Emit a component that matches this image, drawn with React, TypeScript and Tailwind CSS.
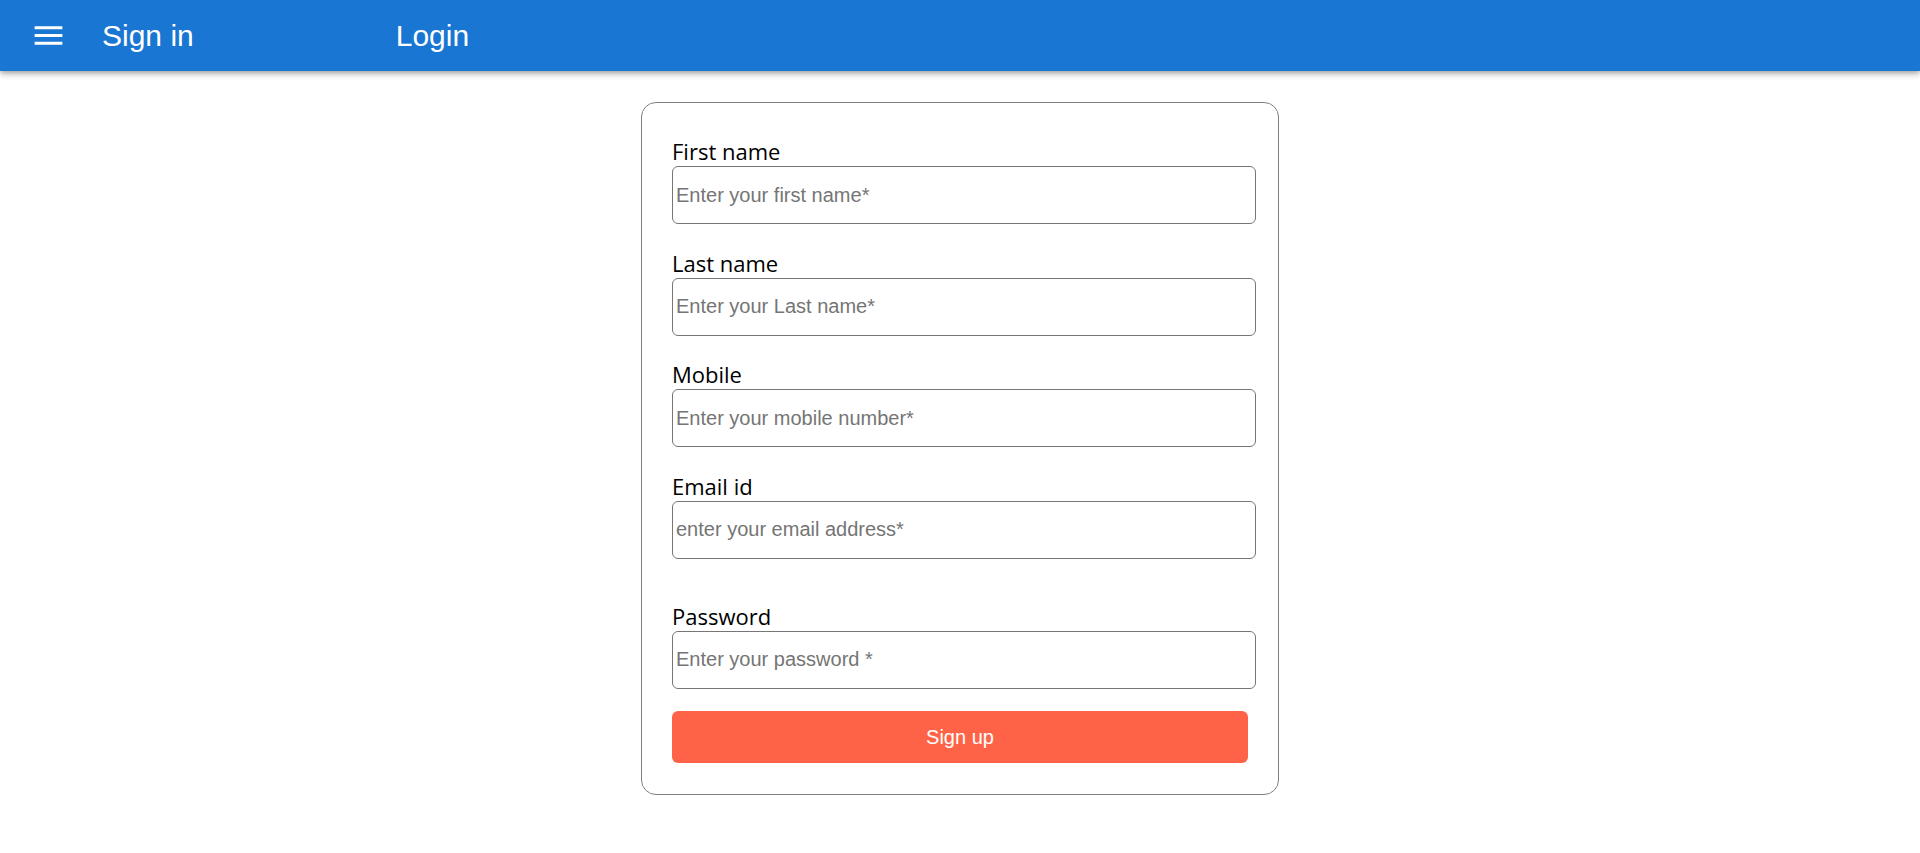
import type { ReactNode } from "react";

function MenuIcon() {
  return (
    <svg viewBox="0 0 24 24" className="w-[37px] h-[37px] fill-white" aria-hidden="true">
      <path d="M3 18h18v-2H3zm0-5h18v-2H3zm0-7v2h18V6z" />
    </svg>
  );
}

function Field({
  label,
  placeholder,
  type = "text",
  last,
}: {
  label: string;
  placeholder: string;
  type?: string;
  last?: ReactNode;
}) {
  return (
    <div className="flex flex-col">
      <label className="text-[22px] leading-[29px] text-black font-['Open_Sans',sans-serif]">
        {label}
      </label>
      <input
        type={type}
        placeholder={placeholder}
        className="w-[584px] h-[58px] border border-[#767676] rounded-[6px] pl-[3px] text-[20px] text-black placeholder:text-[#757575] font-['Liberation_Sans',Arial,sans-serif] outline-none"
      />
      {last}
    </div>
  );
}

export default function App() {
  return (
    <div className="min-h-screen bg-white font-['Liberation_Sans',Arial,sans-serif]">
      {/* App bar */}
      <header className="h-[71px] bg-[#1976d2] flex items-center shadow-[0_2px_4px_-1px_rgba(0,0,0,0.2),0_4px_5px_0_rgba(0,0,0,0.14),0_1px_10px_0_rgba(0,0,0,0.12)]">
        <button className="ml-[30px] w-[37px] h-[37px] flex items-center justify-center">
          <MenuIcon />
        </button>
        <span className="ml-[35px] text-white text-[30px] leading-none">Sign in</span>
        <span className="ml-[202px] text-white text-[30px] leading-none">Login</span>
      </header>

      {/* Form card */}
      <div className="w-[638px] mx-auto mt-[31px] border border-[#808080] rounded-[15px] pl-[30px] pt-[34px] pb-[31px]">
        <div className="flex flex-col">
          <div className="flex flex-col gap-[24.5px]">
            <Field label="First name" placeholder="Enter your first name*" />
            <Field label="Last name" placeholder="Enter your Last name*" />
            <Field label="Mobile" placeholder="Enter your mobile number*" />
            <Field label="Email id" placeholder="enter your email address*" type="email" />
          </div>
          <div className="mt-[43px]">
            <Field label="Password" placeholder="Enter your password *" type="password" />
          </div>
          <button className="mt-[22px] w-[576px] h-[52px] rounded-[6px] bg-[#ff6347] text-white text-[20px]">
            Sign up
          </button>
        </div>
      </div>
    </div>
  );
}
